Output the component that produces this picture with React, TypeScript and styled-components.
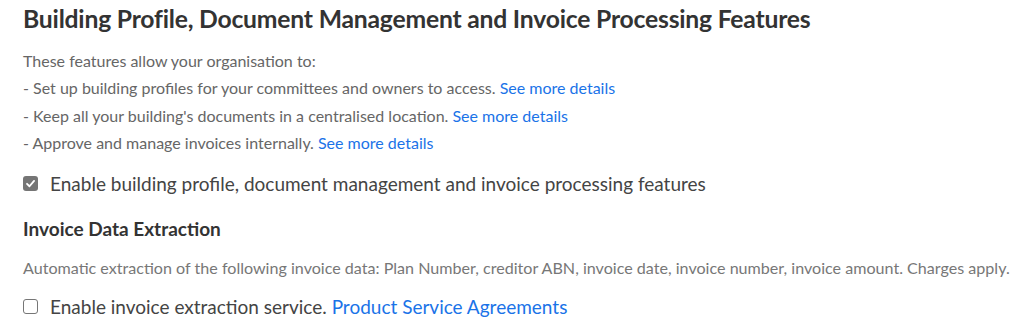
import React from "react";
import styled, { createGlobalStyle } from "styled-components";

const GlobalStyle = createGlobalStyle`
	html, body {
		margin: 0;
		padding: 0;
		background: #ffffff;
		font-family: Lato, "Open Sans", sans-serif;
	}
`;

type Feature = {
	text: string;
};

const features: Feature[] = [
	{ text: "- Set up building profiles for your committees and owners to access." },
	{ text: "- Keep all your building's documents in a centralised location." },
	{ text: "- Approve and manage invoices internally." },
];

function CheckIcon() {
	return (
		<svg width="11" height="11" viewBox="0 0 12 12" fill="none">
			<path
				d="M2.2 6.3 L4.9 9 L9.9 3.2"
				stroke="#ffffff"
				strokeWidth="2"
				strokeLinecap="round"
				strokeLinejoin="round"
			/>
		</svg>
	);
}

function Checkbox({ checked }: { checked: boolean }) {
	return <Box checked={checked}>{checked && <CheckIcon />}</Box>;
}

function App() {
	return (
		<>
			<GlobalStyle />
			<Page>
				<Title>Building Profile, Document Management and Invoice Processing Features</Title>
				<Intro>
					<Line>These features allow your organisation to:</Line>
					{features.map((f) => (
						<Line key={f.text}>
							{f.text} <Link href="#">See more details</Link>
						</Line>
					))}
				</Intro>
				<CheckRow>
					<Checkbox checked />
					<CheckLabel>Enable building profile, document management and invoice processing features</CheckLabel>
				</CheckRow>
				<SubTitle>Invoice Data Extraction</SubTitle>
				<Description>
					Automatic extraction of the following invoice data: Plan Number, creditor ABN, invoice date,
					invoice number, invoice amount. Charges apply.
				</Description>
				<CheckRow last>
					<Checkbox checked={false} />
					<CheckLabel>
						Enable invoice extraction service. <Link href="#">Product Service Agreements</Link>
					</CheckLabel>
				</CheckRow>
			</Page>
		</>
	);
}

const Page = styled.div`
	padding: 2px 23px 0;
	display: flex;
	flex-direction: column;
	color: #666666;
`;

const Title = styled.h1`
	margin: 0;
	font-size: 24.7px;
	line-height: 34px;
	font-weight: 700;
	letter-spacing: -0.2px;
	color: #333333;
`;

const Intro = styled.div`
	margin-top: 11px;
	display: flex;
	flex-direction: column;
`;

const Line = styled.div`
	font-size: 16px;
	line-height: 27.4px;
	color: #666666;
`;

const Link = styled.a`
	color: #1a73e8;
	text-decoration: none;
`;

const CheckRow = styled.label<{ last?: boolean }>`
	margin-top: ${(props) => (props.last ? "14px" : "14px")};
	display: flex;
	align-items: center;
	gap: 12px;
`;

const Box = styled.span<{ checked: boolean }>`
	width: 15px;
	height: 15px;
	box-sizing: border-box;
	border-radius: 3px;
	flex-shrink: 0;
	display: flex;
	align-items: center;
	justify-content: center;
	background-color: ${(props) => (props.checked ? "#757575" : "#ffffff")};
	border: ${(props) => (props.checked ? "none" : "1px solid #767676")};
`;

const CheckLabel = styled.span`
	font-size: 19px;
	line-height: 26px;
	color: #444444;
`;

const SubTitle = styled.h2`
	margin: 19px 0 0;
	font-size: 19px;
	line-height: 26px;
	font-weight: 700;
	color: #333333;
`;

const Description = styled.p`
	margin: 14px 0 0;
	font-size: 16.1px;
	line-height: 24px;
	white-space: nowrap;
	color: #777777;
`;

export default App;
